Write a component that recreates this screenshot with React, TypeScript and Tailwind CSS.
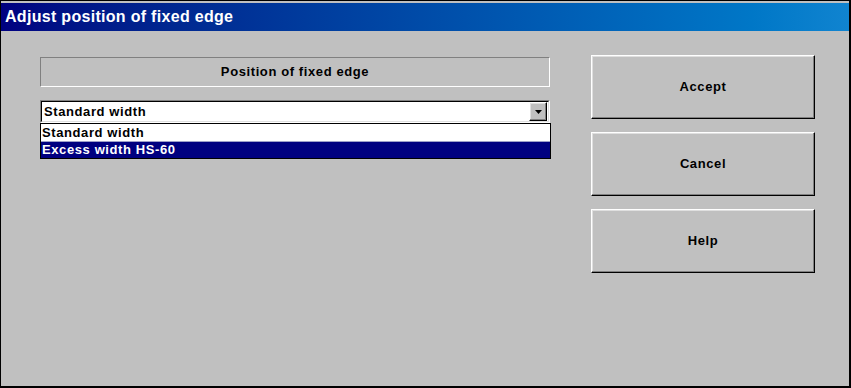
export default function App() {
  const raised =
    "border border-t-white border-l-white border-b-black border-r-black shadow-[inset_-1px_-1px_#808080,inset_1px_1px_#dfdfdf]";

  return (
    <div
      className="w-[851px] h-[388px] bg-[#c0c0c0] border-t border-l border-r-2 border-b-2 border-black flex flex-col"
      style={{ fontFamily: '"Liberation Sans", Arial, sans-serif' }}
    >
      {/* Title bar */}
      <div className="mt-[2px] h-[28px] flex items-center pl-[4px] bg-gradient-to-r from-[#000080] to-[#1084d0]">
        <span className="text-white font-bold text-[16px] tracking-[0.3px] leading-none">Adjust position of fixed edge</span>
      </div>

      <div className="flex pl-[39px]">
        {/* Left column */}
        <div className="w-[510px] mt-[26px] flex flex-col">
          <div className="h-[30px] border border-t-[#808080] border-l-[#808080] border-b-white border-r-white flex items-center justify-center text-[13px] tracking-[0.6px] font-bold text-black">
            Position of fixed edge
          </div>

          <div className="mt-[13px] h-[23px] border border-t-[#808080] border-l-[#808080] border-b-white border-r-white">
            <div className="h-full border border-t-black border-l-black border-b-[#dfdfdf] border-r-[#dfdfdf] bg-white flex items-center">
              <span className="flex-1 pl-[2px] text-[13px] tracking-[0.6px] font-bold text-black">Standard width</span>
              <div className={`w-[18px] h-[19px] mr-[1px] bg-[#c0c0c0] flex items-center justify-center ${raised}`}>
                <svg width="7" height="4" viewBox="0 0 7 4">
                  <path d="M0 0h7L3.5 4z" fill="#000" />
                </svg>
              </div>
            </div>
          </div>

          <div className="w-[511px] border border-black bg-white">
            <div className="h-[17px] flex items-center pl-[1px] text-[13px] tracking-[0.6px] font-bold text-black">Standard width</div>
            <div className="h-[17px] flex items-center pl-[1px] text-[13px] tracking-[0.6px] font-bold text-white bg-[#000080] border-t border-[#9ea0c8]">
              Excess width HS-60
            </div>
          </div>
        </div>

        {/* Right column */}
        <div className="ml-[41px] mt-[24px] w-[224px] flex flex-col gap-[13px]">
          {["Accept", "Cancel", "Help"].map((label) => (
            <div
              key={label}
              className={`h-[64px] bg-[#c0c0c0] flex items-center justify-center text-[13px] tracking-[0.6px] font-bold text-black ${raised}`}
            >
              {label}
            </div>
          ))}
        </div>
      </div>
    </div>
  );
}
